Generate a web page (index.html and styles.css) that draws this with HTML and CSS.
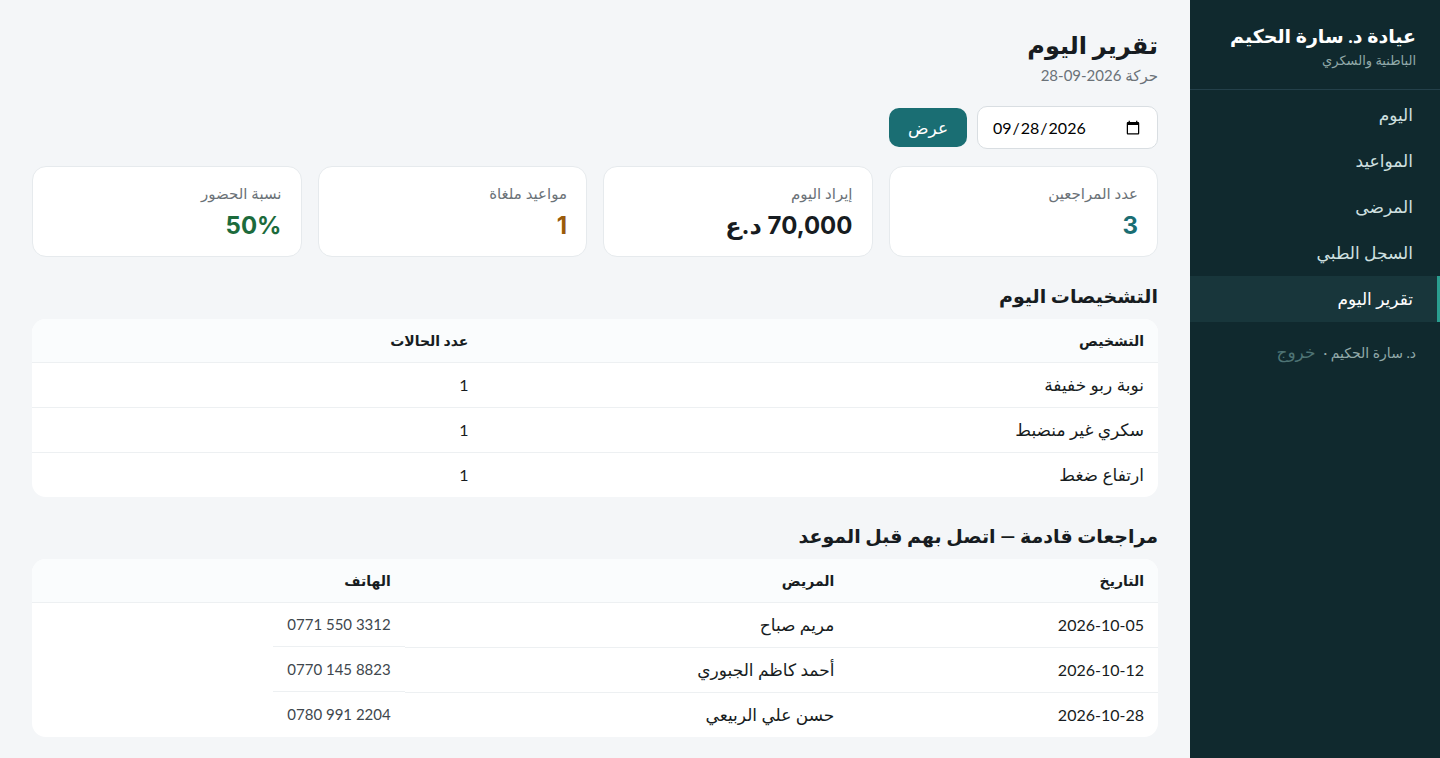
FILE: index.html
```html
<!DOCTYPE html>
<html lang="ar" dir="rtl">
<head>
<meta charset="utf-8">
<meta name="viewport" content="width=device-width, initial-scale=1">
<title>تقرير اليوم</title>
<link rel="stylesheet" href="styles.css">
</head>
<body>
<div class="app">
  <aside class="sidebar">
    <div class="brand">
      <div class="brand-name">عيادة د. سارة الحكيم</div>
      <div class="brand-sub">الباطنية والسكري</div>
    </div>
    <nav class="nav">
      <a class="nav-link" href="#today">اليوم</a>
      <a class="nav-link" href="#appointments">المواعيد</a>
      <a class="nav-link" href="#patients">المرضى</a>
      <a class="nav-link" href="#records">السجل الطبي</a>
      <a class="nav-link active" href="#report" aria-current="page">تقرير اليوم</a>
    </nav>
    <div class="account"><span>د. سارة الحكيم ·</span><a class="logout" href="#logout">خروج</a></div>
  </aside>
  <main class="main">
    <h1 class="title">تقرير اليوم</h1>
    <p class="subtitle">حركة 2026-09-28</p>
    <form class="filter">
      <input class="date" type="date" value="2026-09-28" aria-label="التاريخ" dir="ltr">
      <button class="button" type="button">عرض</button>
    </form>
    <section class="stats">
      <div class="card"><div class="label">عدد المراجعين</div><div class="value teal">3</div></div>
      <div class="card"><div class="label">إيراد اليوم</div><div class="value">70,000 د.ع</div></div>
      <div class="card"><div class="label">مواعيد ملغاة</div><div class="value amber">1</div></div>
      <div class="card"><div class="label">نسبة الحضور</div><div class="value green">50%</div></div>
    </section>
    <h2 class="heading">التشخيصات اليوم</h2>
    <table class="table diagnoses">
      <thead><tr><th>التشخيص</th><th>عدد الحالات</th></tr></thead>
      <tbody>
        <tr><td>نوبة ربو خفيفة</td><td class="num">1</td></tr>
        <tr><td>سكري غير منضبط</td><td class="num">1</td></tr>
        <tr><td>ارتفاع ضغط</td><td class="num">1</td></tr>
      </tbody>
    </table>
    <h2 class="heading">مراجعات قادمة — اتصل بهم قبل الموعد</h2>
    <table class="table followups">
      <thead><tr><th>التاريخ</th><th>المريض</th><th>الهاتف</th></tr></thead>
      <tbody>
        <tr><td class="num">2026-10-05</td><td>مريم صباح</td><td class="phone-cell"><span class="phone" dir="ltr">0771 550 3312</span></td></tr>
        <tr><td class="num">2026-10-12</td><td>أحمد كاظم الجبوري</td><td class="phone-cell"><span class="phone" dir="ltr">0770 145 8823</span></td></tr>
        <tr><td class="num">2026-10-28</td><td>حسن علي الربيعي</td><td class="phone-cell"><span class="phone" dir="ltr">0780 991 2204</span></td></tr>
      </tbody>
    </table>
  </main>
</div>
</body>
</html>
```
FILE: styles.css
```css
* { box-sizing: border-box; }
body {
  margin: 0;
  background: #f4f6f8;
  color: #171c21;
  font-family: Lato, "DejaVu Sans", sans-serif;
  font-size: 17px;
  line-height: 24px;
}
.app { display: flex; min-height: 100vh; }
.sidebar { width: 250px; flex-shrink: 0; background: #10292e; color: #cfe0e0; }
.brand { padding: 24px 24px 17px; border-bottom: 1px solid #24404a; }
.brand-name { color: #fff; font-size: 19px; font-weight: 700; white-space: nowrap; }
.brand-sub { color: #92a9a9; font-size: 13px; }
.nav { padding-top: 2px; }
.nav-link {
  display: block;
  padding: 11px 24px;
  border-right: 3px solid transparent;
  color: #cfe0e0;
  text-decoration: none;
}
.nav-link.active { background: #18363b; border-right-color: #2a9d8f; color: #fff; }
.account { display: flex; align-items: baseline; gap: 8px; padding: 18px 24px; color: #92a9a9; font-size: 14px; }
.logout { color: #4e7475; font-size: 17px; text-decoration: none; }
.main { flex: 1; min-width: 0; padding: 27px 32px 20px; }
.title { margin: 0; font-size: 24px; line-height: 36px; font-weight: 700; }
.subtitle { margin: 0; color: #6b7278; font-size: 15px; }
.filter { display: flex; align-items: center; gap: 10px; margin: 19px 0 17px; }
.date {
  width: 181px;
  height: 43px;
  padding: 8px 14px;
  border: 1px solid #d9dee2;
  border-radius: 10px;
  background: #fff;
  color: #000;
  font: inherit;
  font-size: 16px;
}
.button {
  width: 78px;
  height: 39px;
  padding: 0;
  border: 0;
  border-radius: 10px;
  background: #1a6e73;
  color: #fff;
  font: inherit;
}
.stats { display: grid; grid-template-columns: repeat(4, 1fr); gap: 16px; }
.card { padding: 14px 19px 12px; border: 1px solid #e6eaed; border-radius: 14px; background: #fff; }
.label { color: #6b7278; font-size: 15px; }
.value { margin-top: 3px; font-family: Inter, "DejaVu Sans", sans-serif; font-size: 24px; line-height: 36px; font-weight: 700; }
.teal { color: #1a6e73; }
.amber { color: #9a5b0b; }
.green { color: #1c6b3c; }
.heading { margin: 23px 0 7px; font-size: 19px; line-height: 32px; font-weight: 700; }
.table {
  width: 100%;
  table-layout: fixed;
  border-collapse: separate;
  border-spacing: 0;
  border-radius: 14px;
  overflow: hidden;
  background: #fff;
}
.table th, .table td {
  height: 45px;
  padding: 9px 14px;
  border-bottom: 1px solid #edf0f2;
  text-align: right;
  font-weight: 400;
}
.table th { height: 44px; background: #fafcfd; font-size: 14px; font-weight: 700; white-space: nowrap; }
.table .num { font-size: 16px; }
.table tr:last-child td { border-bottom: 0; height: 44px; }
.diagnoses th:first-child { width: 60%; }
.followups th:first-child { width: 27.5%; }
.followups th:nth-child(2) { width: 39.4%; }
.table .phone-cell { padding: 0; border-bottom: 0; vertical-align: top; }
.phone {
  display: inline-block;
  padding: 9px 14px 10px;
  border-bottom: 1px solid #edf0f2;
  color: #40474d;
  font-size: 15px;
  white-space: nowrap;
  vertical-align: top;
}
tr:last-child .phone { border-bottom: 0; }
```
